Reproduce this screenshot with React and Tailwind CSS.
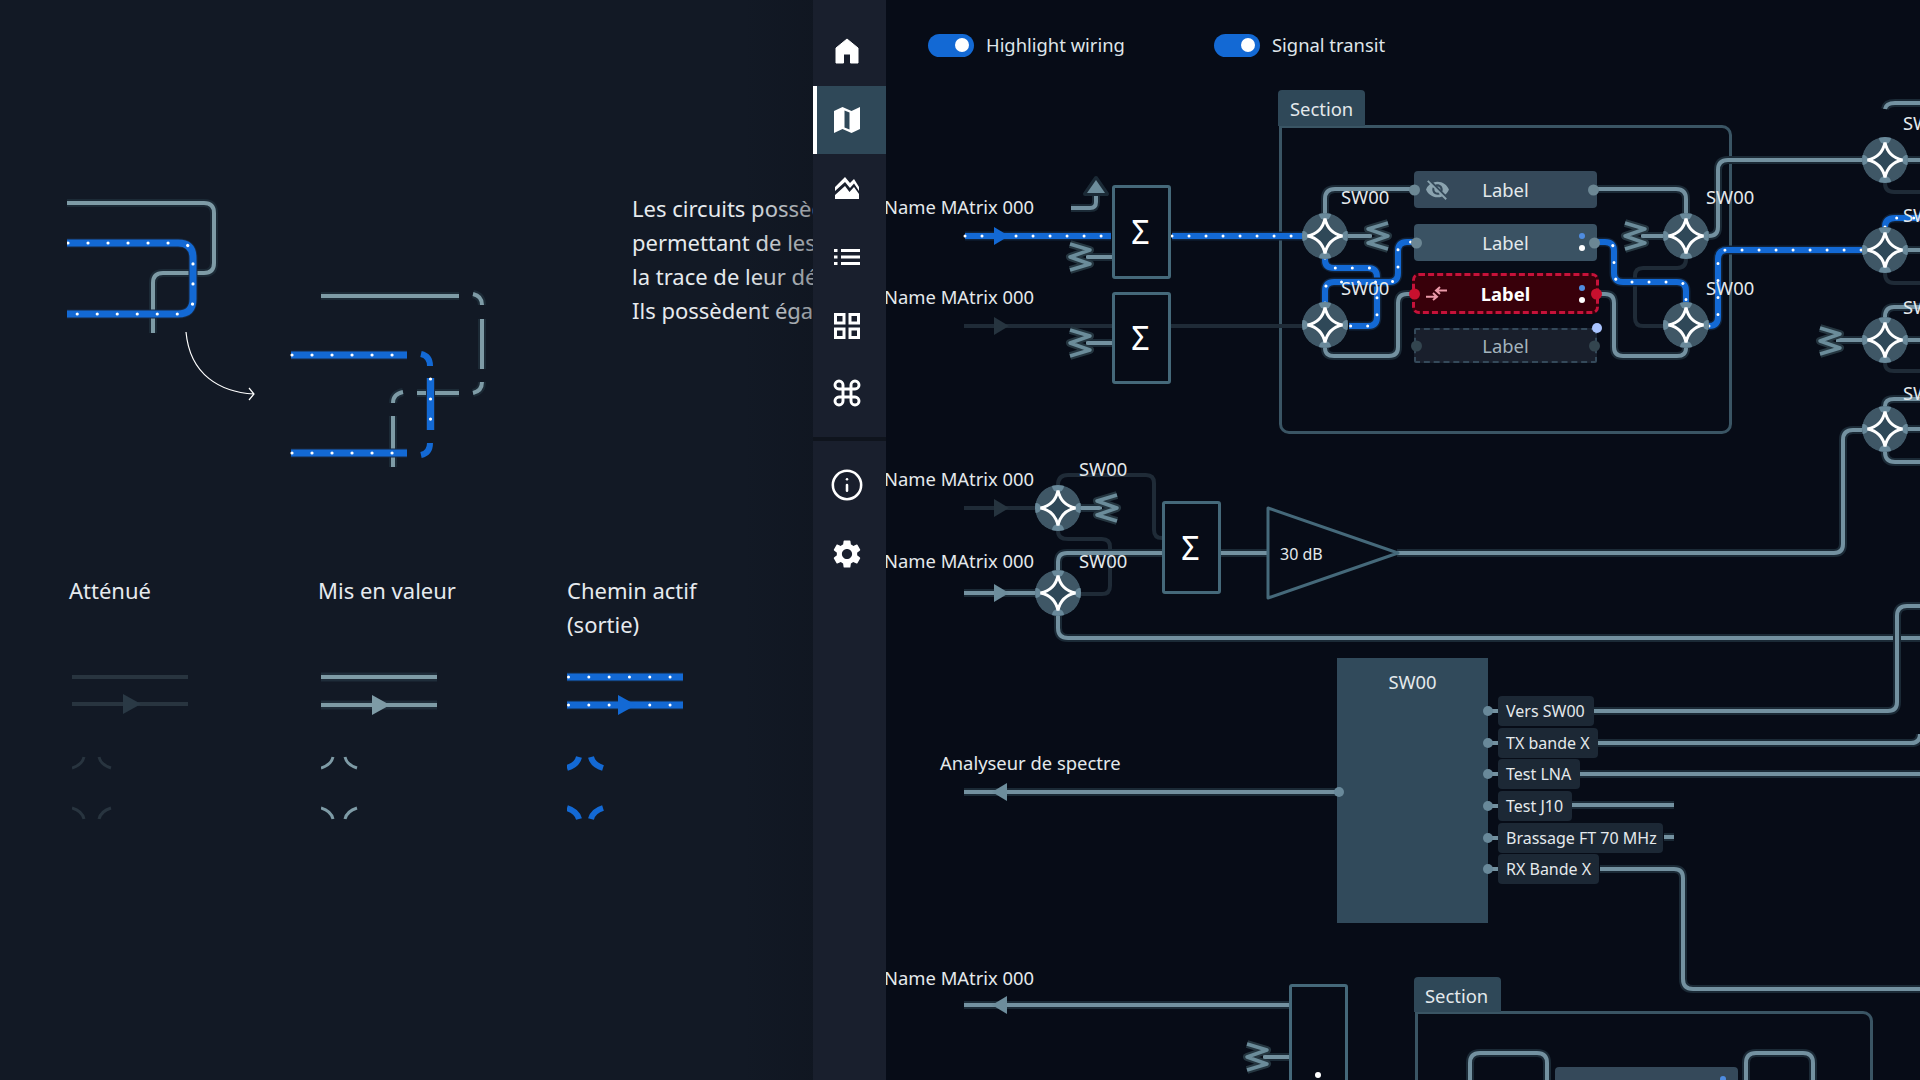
import { Command, Info } from "lucide-react";
import { MdSettings, MdVisibilityOff } from "react-icons/md";

const BLUE = "#1369d4";
const GRAY = "#7391a0";
const DIM = "#1f2b37";

function Wire({ d, tone = "gray", step = 17 }) {
  if (tone === "dim") return <path d={d} fill="none" stroke={DIM} strokeWidth="4" />;
  if (tone === "blue") {
    return (
      <g fill="none">
        <path d={d} stroke="#11233a" strokeWidth="9" />
        <path d={d} stroke={BLUE} strokeWidth="6" />
        <path d={d} stroke="#fff" strokeWidth="3" strokeLinecap="round" strokeDasharray={`0.01 ${step}`} />
      </g>
    );
  }
  return (
    <g fill="none">
      <path d={d} stroke="#1b2a36" strokeWidth="8" />
      <path d={d} stroke={GRAY} strokeWidth="4" />
    </g>
  );
}

function Splitter({ x, y }) {
  return (
    <g transform={`translate(${x} ${y})`} clipPath="url(#node-clip)">
      <circle r="23" fill="#3f5766" />
      <circle cx="0" cy="-22" r="6" fill="#69899a" />
      <circle cx="0" cy="22" r="6" fill="#69899a" />
      <circle cx="-22" cy="0" r="5" fill="#69899a" />
      <circle cx="22" cy="0" r="5" fill="#69899a" />
      <path
        d="M0 -17.5 Q3 -3 17.5 0 Q3 3 0 17.5 Q-3 3 -17.5 0 Q-3 -3 0 -17.5 Z"
        fill="#2f4858"
        stroke="#fff"
        strokeWidth="3"
        strokeLinejoin="miter"
      />
    </g>
  );
}

// attenuator zigzag
function Spring({ x, y, flip }) {
  const k = flip ? -1 : 1;
  const pts = [[10, -13], [-10, -7], [10, 0], [-10, 7], [10, 13]].map(([a, b]) => `${a * k},${b}`).join(" ");
  return (
    <g transform={`translate(${x} ${y})`} fill="none" strokeLinejoin="round">
      <polyline points={pts} stroke="#253640" strokeWidth="8" />
      <polyline points={pts} stroke="#6b8c9a" strokeWidth="3.5" />
    </g>
  );
}

function Tri({ x, y, left, color }) {
  const pts = left
    ? `${x + 15},${y - 9} ${x},${y} ${x + 15},${y + 9}`
    : `${x},${y - 9} ${x + 15},${y} ${x},${y + 9}`;
  return <polygon points={pts} fill={color} />;
}

function Wiring() {
  return (
    <svg className="absolute left-0 top-0 h-[1080px] w-[1034px]" viewBox="886 0 1034 1080">
      <defs>
        <clipPath id="node-clip">
          <circle r="23" />
        </clipPath>
      </defs>

      {/* dimmed paths */}
      <Wire tone="dim" d="M964 326 H1112" />
      <Wire tone="dim" d="M1170 326 H1303" />
      <Wire tone="dim" d="M1686 259 Q1686 268 1677 268 H1643 Q1635 268 1635 276 V318 Q1635 326 1643 326 H1664" />
      <Wire tone="dim" d="M964 508 H1035" />
      <Wire tone="dim" d="M1058 485 Q1058 475 1068 475 H1146 Q1154 475 1154 483 V530 Q1154 538 1162 538" />
      <Wire tone="dim" d="M1058 531 Q1058 539 1068 539 H1102 Q1110 539 1110 547 V586 Q1110 594 1102 594 H1081" />
      <Wire tone="dim" d="M1885 183 Q1885 192 1894 192 H1920" />
      <Wire tone="dim" d="M1885 273 Q1885 283 1894 283 H1920" />
      <Wire tone="dim" d="M1885 363 Q1885 371 1894 371 H1920" />
      <Tri x={994} y={326} color="#26343f" />
      <Tri x={994} y={508} color="#26343f" />

      {/* normal paths */}
      <Wire d="M1325 213 V199 Q1325 189 1335 189 H1414" />
      <Wire d="M1597 189 H1676 Q1686 189 1686 199 V213" />
      <Wire d="M1348 236 H1372" />
      <Wire d="M1663 236 H1641" />
      <Wire d="M1709 236 Q1718 236 1718 227 V170 Q1718 160 1728 160 H1862" />
      <Wire d="M1325 348 Q1325 356 1334 356 H1389 Q1398 356 1398 347 V303 Q1398 294 1407 294 H1412" />
      <Wire d="M1600 294 H1605 Q1614 294 1614 303 V347 Q1614 356 1623 356 H1677 Q1686 356 1686 348" />
      <Wire d="M1908 160 H1920" />
      <Wire d="M1908 250 H1920" />
      <Wire d="M1908 340 H1920" />
      <Wire d="M1908 429 H1920" />
      <Wire d="M1885 109 Q1886 103 1895 103 H1920" />
      <Wire d="M1885 317 Q1885 307 1894 307 H1920" />
      <Wire d="M1885 406 Q1885 399 1894 399 H1920" />
      <Wire d="M1885 452 Q1885 462 1895 462 H1920" />
      <Wire d="M1862 340 H1836" />
      <Wire d="M964 593 H1035" />
      <Wire d="M1081 508 H1102" />
      <Wire d="M1058 570 V562 Q1058 553 1067 553 H1162" />
      <Wire d="M1220 553 H1268" />
      <Wire d="M1397 553 H1834 Q1843 553 1843 544 V440 Q1843 430 1853 430 H1862" />
      <Wire d="M1058 616 V628 Q1058 638 1068 638 H1920" />
      <Wire d="M1071 208 H1090 Q1096 208 1096 202 V190" />
      <Wire d="M1086 257 H1112" />
      <Wire d="M1086 343 H1112" />
      <Wire d="M964 792 H1340" />
      <Wire d="M964 1005 H1289" />
      <Wire d="M1263 1057 H1289" />
      <Wire d="M1594 711 H1888 Q1897 711 1897 702 V616 Q1897 606 1907 606 H1920" />
      <Wire d="M1598 743 H1911 Q1920 743 1920 734" />
      <Wire d="M1580 774 H1920" />
      <Wire d="M1572 805 H1674" />
      <Wire d="M1664 837 H1674" />
      <Wire d="M1600 869 H1674 Q1683 869 1683 878 V979 Q1683 989 1693 989 H1920" />
      <Wire d="M1470 1080 V1063 Q1470 1053 1480 1053 H1537 Q1547 1053 1547 1063 V1080" />
      <Wire d="M1746 1080 V1063 Q1746 1053 1756 1053 H1803 Q1813 1053 1813 1063 V1080" />

      {/* active path */}
      <Wire tone="blue" d="M965 236 H1111" />
      <Wire tone="blue" d="M1172 236 H1303" />
      <Wire tone="blue" d="M1325 258 V260 Q1325 268 1334 268 H1368 Q1377 268 1377 277 V317 Q1377 326 1368 326 H1349" />
      <Wire tone="blue" d="M1325 303 V291 Q1325 282 1334 282 H1389 Q1398 282 1398 273 V251 Q1398 242 1407 242 H1414" />
      <Wire tone="blue" d="M1597 242 H1605 Q1614 242 1614 251 V273 Q1614 282 1623 282 H1677 Q1686 282 1686 291 V303" />
      <Wire tone="blue" d="M1709 326 Q1718 326 1718 317 V259 Q1718 250 1727 250 H1862" />
      <Wire tone="blue" d="M1885 227 Q1885 218 1895 218 H1920" />

      <Tri x={994} y={236} color={BLUE} />
      <Tri x={994} y={593} color="#6d8d9c" />
      <Tri x={992} y={792} left color="#6d8d9c" />
      <Tri x={992} y={1005} left color="#6d8d9c" />
      <g>
        <path d="M1096 178 L1107 194 H1085 Z" fill="#1b2a36" stroke="#1b2a36" strokeWidth="4" strokeLinejoin="round" />
        <path d="M1096 180 L1105 193 H1087 Z" fill="#6d8d9c" />
      </g>

      <Spring x={1080} y={257} flip />
      <Spring x={1080} y={343} flip />
      <Spring x={1378} y={236} />
      <Spring x={1635} y={236} flip />
      <Spring x={1107} y={508} />
      <Spring x={1830} y={341} flip />
      <Spring x={1257} y={1057} flip />

      {[[1325, 236], [1325, 325], [1686, 236], [1686, 325], [1885, 160], [1885, 250], [1885, 340], [1885, 429], [1058, 508], [1058, 593]].map(([x, y]) => (
        <Splitter key={`${x}-${y}`} x={x} y={y} />
      ))}

      {/* amplifier */}
      <polygon points="1268,508 1398,553 1268,598" fill="#070c17" stroke="#45697a" strokeWidth="3" strokeLinejoin="round" />
      <circle cx="1318" cy="1075" r="3" fill="#fff" />
    </svg>
  );
}

function Port({ className }) {
  return <span className={`absolute top-1/2 h-[11px] w-[11px] -translate-y-1/2 rounded-full ${className}`} />;
}

function SumBox({ className }) {
  return (
    <div className={`absolute flex items-center justify-center rounded-[3px] border-[3px] border-[#45697a] pr-[2px] text-[32px] leading-none text-white ${className}`}>
      Σ
    </div>
  );
}

function MainLabel({ className, children }) {
  return <div className={`absolute whitespace-nowrap leading-[24px] ${className}`}>{children}</div>;
}

// output tag on the SW00 block, with its stub back to the block
function Pill({ className, children }) {
  return (
    <div className={`relative flex h-[30px] items-center rounded-[4px] bg-[#1c2835] pl-[8px] text-[16px] leading-none text-[#e4e9ec] ${className}`}>
      <span className="absolute left-[-12px] top-1/2 h-[4px] w-[12px] -translate-y-1/2 bg-[#7391a0]" />
      <span className="absolute left-[-15px] top-1/2 h-[10px] w-[10px] -translate-y-1/2 rounded-full bg-[#69899a]" />
      {children}
    </div>
  );
}

function Toggle({ label, className }) {
  return (
    <div className={`flex items-center gap-[12px] ${className}`}>
      <div className="flex h-[23px] w-[46px] items-center justify-end rounded-full bg-[#1369d4] pr-[5px]">
        <div className="h-[14px] w-[14px] rounded-full bg-white" />
      </div>
      <span className="text-[18.4px] leading-[24px] text-[#dfe5e9]">{label}</span>
    </div>
  );
}

function Canvas() {
  return (
    <div className="relative h-[1080px] flex-1 overflow-hidden bg-[#070c17] text-[18.4px] text-[#e4e9ec]">
      {/* sections sit under the wires */}
      <div className="absolute left-[393px] top-[125px] h-[309px] w-[453px] rounded-[10px] rounded-tl-none border-[3px] border-[#3a5564]" />
      <div className="absolute left-[392px] top-[90px] flex h-[36px] w-[87px] items-center rounded-t-[4px] bg-[#2f4858] pl-[12px] pt-[2px]">Section</div>
      <div className="absolute left-[529px] top-[1011px] h-[120px] w-[458px] rounded-[10px] rounded-tl-none border-[3px] border-[#3a5564]" />
      <div className="absolute left-[528px] top-[977px] flex h-[35px] w-[87px] items-center rounded-t-[4px] bg-[#2f4858] pl-[11px] pt-[2px]">Section</div>

      <Wiring />

      <div className="absolute left-[42px] top-[33px] flex">
        <Toggle label="Highlight wiring" className="w-[286px]" />
        <Toggle label="Signal transit" />
      </div>

      <SumBox className="left-[226px] top-[185px] h-[94px] w-[59px]" />
      <SumBox className="left-[226px] top-[292px] h-[92px] w-[59px]" />
      <SumBox className="left-[276px] top-[501px] h-[93px] w-[59px]" />
      <div className="absolute left-[403px] top-[984px] h-[120px] w-[59px] rounded-[3px] border-[3px] border-[#45697a]" />

      <MainLabel className="left-[-2px] top-[195px]">Name MAtrix 000</MainLabel>
      <MainLabel className="left-[-2px] top-[285px]">Name MAtrix 000</MainLabel>
      <MainLabel className="left-[-2px] top-[467px]">Name MAtrix 000</MainLabel>
      <MainLabel className="left-[-2px] top-[549px]">Name MAtrix 000</MainLabel>
      <MainLabel className="left-[-2px] top-[966px]">Name MAtrix 000</MainLabel>
      <MainLabel className="left-[54px] top-[751px]">Analyseur de spectre</MainLabel>

      <MainLabel className="left-[455px] top-[185px]">SW00</MainLabel>
      <MainLabel className="left-[455px] top-[276px]">SW00</MainLabel>
      <MainLabel className="left-[820px] top-[185px]">SW00</MainLabel>
      <MainLabel className="left-[820px] top-[276px]">SW00</MainLabel>
      <MainLabel className="left-[193px] top-[457px]">SW00</MainLabel>
      <MainLabel className="left-[193px] top-[549px]">SW00</MainLabel>
      <MainLabel className="left-[1017px] top-[111px]">SW00</MainLabel>
      <MainLabel className="left-[1017px] top-[203px]">SW00</MainLabel>
      <MainLabel className="left-[1017px] top-[295px]">SW00</MainLabel>
      <MainLabel className="left-[1017px] top-[381px]">SW00</MainLabel>
      <MainLabel className="left-[394px] top-[542px] text-[16px]">30 dB</MainLabel>

      {/* matrix labels, stacked */}
      <div className="absolute left-[526px] top-[171px] flex w-[187px] flex-col items-center">
        <div className="relative flex h-[37px] w-[183px] items-center justify-center rounded-[4px] bg-[#35495a]">
          <MdVisibilityOff className="absolute left-[11px] top-[6px] text-[#8ba3af]" size={25} />
          Label
          <Port className="left-[-5px] bg-[#6c8794]" />
          <Port className="right-[-2px] bg-[#6c8794]" />
        </div>
        <div className="relative mt-[16px] flex h-[37px] w-[183px] items-center justify-center rounded-[4px] bg-[#3a5263]">
          Label
          <span className="absolute right-[12px] top-[9px] h-[6px] w-[6px] rounded-full bg-[#4f8ce0]" />
          <span className="absolute right-[12px] top-[21px] h-[6px] w-[6px] rounded-full bg-white" />
          <Port className="left-[-3px] bg-[#6c8794]" />
          <Port className="right-[-3px] bg-[#6c8794]" />
        </div>
        <div className="relative mt-[12px] flex h-[41px] w-[187px] items-center justify-center rounded-[7px] border-[3px] border-dashed border-[#c6123a] bg-[#38000a] pt-[1px] font-bold text-white">
          <svg className="absolute left-[11px] top-[6px]" width="24" height="24" viewBox="0 0 24 24" fill="none" stroke="#eb9aa9" strokeWidth="2">
            <path d="M21 8.5 H10 M14 5 L10 8.5 L14 12" />
            <path d="M0 14.7 H11 M7 11 L11 14.7 L7 18" />
          </svg>
          Label
          <span className="absolute right-[11px] top-[9px] h-[6px] w-[6px] rounded-full bg-[#4f8ce0]" />
          <span className="absolute right-[11px] top-[21px] h-[6px] w-[6px] rounded-full bg-white" />
          <Port className="left-[-6px] bg-[#c8102e]" />
          <Port className="right-[-6px] bg-[#c8102e]" />
        </div>
        <div className="relative mt-[14px] flex h-[35px] w-[183px] items-center justify-center rounded-[2px] border-2 border-dashed border-[#34495a] bg-[#191f2c] text-[#a3b3bd]">
          Label
          <Port className="left-[-5px] bg-[#33454f]" />
          <Port className="right-[-5px] bg-[#33454f]" />
          <span className="absolute right-[-7px] top-[-7px] h-[10px] w-[10px] rounded-full bg-[#aac4ff]" />
        </div>
      </div>
      <div className="absolute left-[669px] top-[1067px] flex h-[37px] w-[183px] justify-center rounded-[4px] bg-[#35495a] pt-[6px]">
        TB Rel
        <span className="absolute right-[12px] top-[9px] h-[6px] w-[6px] rounded-full bg-[#4f8ce0]" />
      </div>

      {/* SW00 block and its outputs */}
      <div className="absolute left-[451px] top-[658px] flex h-[265px] w-[151px] justify-center bg-[#314a5b] pt-[10px]">
        <span className="absolute left-[-3px] top-[129px] h-[10px] w-[10px] rounded-full bg-[#69899a]" />
        SW00
      </div>
      <div className="absolute left-[612px] top-[696px] flex flex-col items-start gap-[1.7px]">
        <Pill className="w-[96px]">Vers SW00</Pill>
        <Pill className="w-[100px]">TX bande X</Pill>
        <Pill className="w-[82px]">Test LNA</Pill>
        <Pill className="w-[74px]">Test J10</Pill>
        <Pill className="w-[165px]">Brassage FT 70 MHz</Pill>
        <Pill className="w-[101px]">RX Bande X</Pill>
      </div>
    </div>
  );
}

function NavItem({ active, children }) {
  return (
    <div className={`relative flex h-[68.6px] items-center justify-center pr-[5px] text-white ${active ? "bg-[#2f4858]" : ""}`}>
      {active && <span className="absolute bottom-0 left-0 top-0 w-[4px] bg-white" />}
      {children}
    </div>
  );
}

function Sidebar() {
  return (
    <nav className="flex h-[1080px] w-[73px] shrink-0 flex-col bg-[#0f141d]">
      <div className="h-[437px] bg-[#191f2d] pt-[17px]">
        <NavItem>
          <svg width="24" height="26" viewBox="0 0 24 26" fill="#fff" stroke="#fff" strokeLinejoin="round" strokeWidth="1">
            <path d="M12 1 L23 10 V25 H15.5 V16 H8.5 V25 H1 V10 Z" />
          </svg>
        </NavItem>
        <NavItem active>
          <svg width="26" height="26" viewBox="0 0 26 26" fill="#fff">
            <path fillRule="evenodd" d="M0 4 L8.5 0 L17.5 4 L26 0 V22 L17.5 26 L8.5 22 L0 26 Z M10.5 3.5 V20.5 L15.5 22.5 V5.5 Z" />
          </svg>
        </NavItem>
        <NavItem>
          <svg width="24" height="23" viewBox="0 0 24 23" fill="#fff">
            <path d="M0 10 L10 0 L15 6 L19 2 L24 10 V14 L19 6.5 L15 11 L10 5 L0 14 Z" />
            <path d="M0 22 H24 V17 L19 10 L14.5 15 L10 9 L0 18 Z" />
          </svg>
        </NavItem>
        <NavItem>
          <svg width="26" height="16" viewBox="0 0 26 16" fill="#fff">
            <path d="M0 0 H3.5 V3 H0 Z M7 0 H26 V3 H7 Z M0 6.5 H3.5 V9.5 H0 Z M7 6.5 H26 V9.5 H7 Z M0 13 H3.5 V16 H0 Z M7 13 H26 V16 H7 Z" />
          </svg>
        </NavItem>
        <NavItem>
          <svg width="26" height="26" viewBox="0 0 26 26" fill="none" stroke="#fff" strokeWidth="3">
            <rect x="1.5" y="1.5" width="8.5" height="8.5" />
            <rect x="16" y="1.5" width="8.5" height="8.5" />
            <rect x="1.5" y="16" width="8.5" height="8.5" />
            <rect x="16" y="16" width="8.5" height="8.5" />
          </svg>
        </NavItem>
        <NavItem>
          <Command className="mb-[2px]" size={32} strokeWidth={2.2} />
        </NavItem>
      </div>
      <div className="mt-[4px] flex-1 bg-[#191f2d] pt-[10px]">
        <NavItem>
          <Info size={34} strokeWidth={1.8} />
        </NavItem>
        <NavItem>
          <MdSettings size={34} />
        </NavItem>
      </div>
    </nav>
  );
}

function LeftDiagram() {
  const halo = "#1c2a36";
  const gray = "#7e9ba6";
  const gr = (d) => (
    <g fill="none" key={d}>
      <path d={d} stroke={halo} strokeWidth="8" />
      <path d={d} stroke={gray} strokeWidth="4" />
    </g>
  );
  const bl = (d) => (
    <g fill="none" key={d}>
      <path d={d} stroke="#182b45" strokeWidth="9" />
      <path d={d} stroke={BLUE} strokeWidth="7" />
      <path d={d} stroke="#fff" strokeWidth="3.2" strokeLinecap="round" strokeDasharray="0.01 20" strokeDashoffset="-1" />
    </g>
  );
  return (
    <svg className="h-[290px] w-[565px] shrink-0" viewBox="67 192 565 290">
      {gr("M67 203 H204 Q214 203 214 213 V263 Q214 273 204 273 H163 Q153 273 153 283 V333")}
      {bl("M67 243 H178 Q193 243 193 258 V299 Q193 314 178 314 H67")}
      <path d="M186 332 C190 375 220 392 254 394 M249 388 L254 394 L249 400" fill="none" stroke="#fff" strokeWidth="1.2" />

      {gr("M321 296 H459")}
      {gr("M473 294 Q482 296 482 305")}
      {gr("M482 319 V369")}
      {gr("M482 382 Q482 391 473 393")}
      {gr("M417 393 H459")}
      {gr("M403 392 Q393 394 393 403")}
      {gr("M393 416 V467")}
      {bl("M291 355 H407")}
      {bl("M291 453 H407")}
      {bl("M430.5 378 V430")}
      <g fill="none" stroke={BLUE} strokeWidth="6">
        <path d="M421 354 Q430 356 430 366" />
        <path d="M430 443 Q430 453 421 455" />
      </g>
    </svg>
  );
}

function Swatch({ tone, spread, y2 = 63, className = "" }) {
  const styles = {
    dim: { line: "#28343f", arrow: "#2a3945", w: 4, arc: 3, halo: null },
    gray: { line: "#7e9ba6", arrow: "#7e9ba6", w: 4, arc: 3, halo: "#1f2d3a" },
    blue: { line: BLUE, arrow: BLUE, w: 7, arc: 6, halo: "#152a45" },
  }[tone];
  const a = 12;
  const b = a + spread;
  const c = b + 12;
  return (
    <svg className={`h-[190px] w-[130px] ${className}`} viewBox="0 0 130 190" fill="none">
      {[35, y2].map((y) => (
        <g key={y}>
          {styles.halo && <path d={`M0 ${y} H116`} stroke={styles.halo} strokeWidth="9" />}
          <path d={`M0 ${y} H116`} stroke={styles.line} strokeWidth={styles.w} />
          {tone === "blue" && <path d={`M1.5 ${y} H116`} stroke="#fff" strokeWidth="3" strokeLinecap="round" strokeDasharray="0.01 20.3" />}
        </g>
      ))}
      <polygon points={`51,${y2 - 10} 69,${y2} 51,${y2 + 10}`} fill={styles.arrow} />
      <g stroke={styles.line} strokeWidth={styles.arc}>
        <path d={`M${a} 115 Q${a - 2} 123 0 126`} />
        <path d={`M${b} 115 Q${b + 2} 123 ${c} 126`} />
        <path d={`M0 166 Q${a - 2} 169 ${a} 177`} />
        <path d={`M${c} 166 Q${b + 2} 169 ${b} 177`} />
      </g>
    </svg>
  );
}

function LeftPanel() {
  return (
    <section className="relative h-[1080px] w-[813px] shrink-0 overflow-hidden bg-[#121925] pt-[192px] text-[22px] leading-[34px] text-[#e6eaee]">
      <div className="flex pl-[67px]">
        <LeftDiagram />
        <p className="-mt-[1px] whitespace-nowrap">
          Les circuits possèdent
          <br />
          permettant de les
          <br />
          la trace de leur dé
          <br />
          Ils possèdent égale
        </p>
      </div>

      <div className="mt-[91px] grid grid-cols-[249px_249px_1fr] pl-[69px]">
        <div>
          <h3 className="h-[69px] font-normal">Atténué</h3>
          <Swatch tone="dim" spread={15} y2={62} className="ml-[3px]" />
        </div>
        <div>
          <h3 className="h-[69px] font-normal">Mis en valeur</h3>
          <Swatch tone="gray" spread={12} className="ml-[3px]" />
        </div>
        <div>
          <h3 className="h-[69px] font-normal">
            Chemin actif
            <br />
            (sortie)
          </h3>
          <Swatch tone="blue" spread={12} />
        </div>
      </div>

      <div className="absolute bottom-0 right-0 top-0 w-[70px] bg-linear-to-r from-transparent to-[#0e131c]/40" />
    </section>
  );
}

export default function App() {
  return (
    <div className="flex h-screen w-screen overflow-hidden bg-[#070c17] [font-family:'Noto_Sans',sans-serif]">
      <LeftPanel />
      <Sidebar />
      <Canvas />
    </div>
  );
}
